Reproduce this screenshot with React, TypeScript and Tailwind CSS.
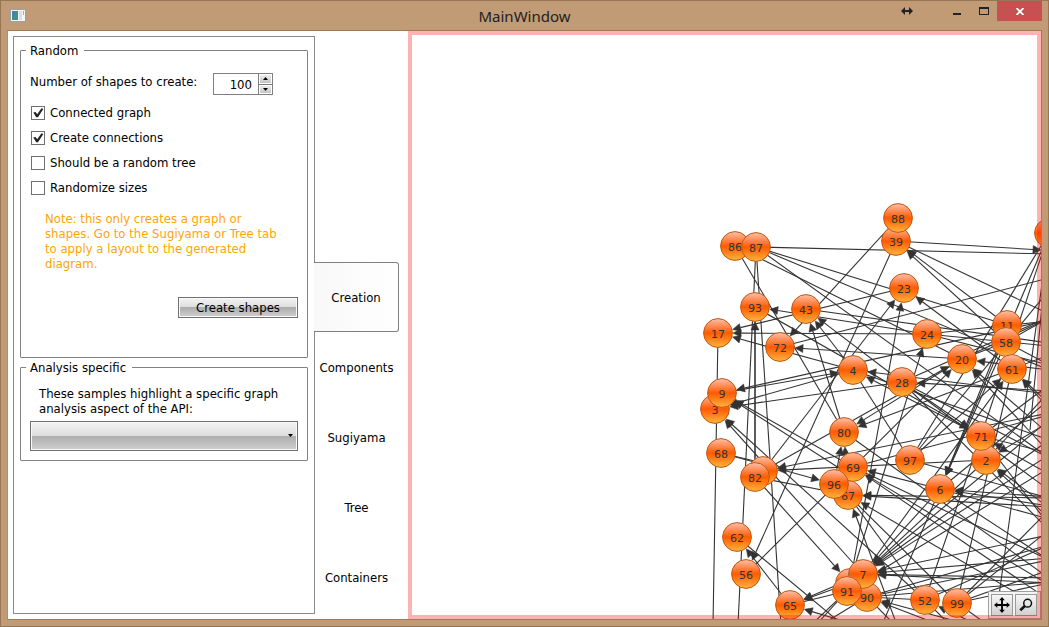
import { useState } from "react";

type Point = [number, number];
type End = string | Point;

const R = 14;

const nodes: Record<string, Point> = {
  "offA": [1049, 233],
  "86": [735, 246],
  "87": [756, 247],
  "93": [755, 307],
  "43": [806, 309],
  "17": [718, 333],
  "72": [780, 347],
  "39": [896, 241],
  "88": [898, 218],
  "23": [904, 288],
  "24": [927, 334],
  "20": [962, 359],
  "11": [1007, 325],
  "58": [1006, 342],
  "61": [1012, 369],
  "28": [902, 382],
  "4": [853, 370],
  "3": [715, 409],
  "9": [722, 393],
  "68": [721, 453],
  "offH": [763, 471],
  "82": [755, 477],
  "80": [844, 432],
  "67": [848, 495],
  "69": [853, 467],
  "96": [834, 484],
  "97": [910, 460],
  "2": [986, 460],
  "71": [981, 436],
  "6": [940, 489],
  "62": [737, 537],
  "56": [746, 574],
  "65": [790, 605],
  "offJ": [850, 583],
  "90": [867, 597],
  "7": [863, 574],
  "91": [847, 591],
  "52": [925, 600],
  "99": [957, 603],
};

const drawOrder = [
  "offA", "86", "87", "93", "43", "17", "72", "39", "88", "23", "24", "20",
  "11", "58", "61", "28", "4", "3", "9", "68", "offH", "82", "80", "67", "69",
  "96", "97", "2", "71", "6", "62", "56", "65", "offJ", "90", "7", "91", "52", "99",
];

const lines: [End, End][] = [
  ["87", [1049, 254]],
  ["86", "80"],
  ["87", [781, 625]],
  ["87", [738, 625]],
  ["17", [713, 625]],
  ["43", [1049, 343]],
  ["72", [1049, 278]],
  ["87", "11"],
  ["87", [1049, 370]],
  ["86", "20"],
  ["87", [1049, 458]],
  ["4", "97"],
  ["4", [1049, 440]],
  ["28", [1049, 530]],
  ["28", [1049, 458]],
  ["61", "99"],
  ["offA", [997, 610]],
  ["offA", "97"],
  ["offA", "71"],
  ["offA", [1030, 430]],
  ["39", [1049, 314]],
  ["24", [1049, 321]],
  ["24", [1049, 346]],
  ["24", [1049, 365]],
  ["28", [1049, 317]],
  ["20", [1049, 318]],
  ["20", "58"],
  ["58", [1049, 318]],
  ["58", [1049, 365]],
  ["61", [1049, 355]],
  ["71", [1049, 453]],
  ["52", "71"],
  ["6", [882, 625]],
  ["62", [843, 625]],
  ["91", [811, 625]],
  ["91", [816, 625]],
  ["90", [821, 625]],
  ["68", [763, 463]],
  ["82", "67"],
  ["90", [1049, 545]],
  ["90", [1049, 582]],
  ["90", "52"],
  ["99", [1049, 530]],
  ["99", [1049, 510]],
  ["99", [1049, 583]],
  ["99", [1049, 570]],
  ["99", [988, 625]],
  ["52", [950, 625]],
  ["67", "99"],
  ["67", "52"],
  ["71", [1049, 525]],
  ["28", [1049, 490]],
  ["69", [1049, 560]],
  ["6", [1049, 560]],
  ["6", [1049, 519]],
  ["97", [1049, 498]],
  ["90", [895, 625]],
  ["7", [1049, 420]],
  ["91", [1049, 468]],
  ["52", [1049, 545]],
  ["7", [1049, 578]],
  ["91", "65"],
  ["93", "82"],
  ["80", [1049, 578]],
  ["69", [1049, 415]],
  ["97", [1049, 290]],
  ["2", [1049, 392]],
  ["71", [1049, 385]],
  ["6", [1049, 400]],
  ["90", [1049, 560]],
];

const arrows: [End, End][] = [
  ["39", [1041, 250]],
  ["82", "93"],
  ["24", "93"],
  ["23", "17"],
  ["24", "17"],
  ["4", "17"],
  ["20", "72"],
  ["88", "72"],
  ["39", "56"],
  ["56", "20"],
  ["61", "23"],
  ["93", "71"],
  ["28", "71"],
  ["80", "43"],
  ["4", "43"],
  ["28", "43"],
  ["offH", "23"],
  ["offJ", "23"],
  ["91", "24"],
  [[1049, 320], "9"],
  ["9", "4"],
  ["28", "3"],
  ["4", "3"],
  ["69", "9"],
  [[853, 477], "9"],
  ["52", "3"],
  ["7", "3"],
  ["82", "offJ"],
  ["68", "96"],
  [[1049, 413], "offH"],
  ["2", "offH"],
  ["20", "80"],
  ["61", "80"],
  ["offH", "20"],
  ["96", "80"],
  ["67", "80"],
  [[1049, 391], "28"],
  ["71", "4"],
  [[1049, 394], "4"],
  [[1049, 434], "20"],
  [[1049, 452], "20"],
  [[1049, 370], "20"],
  ["97", "61"],
  ["7", "61"],
  [[1049, 408], "61"],
  [[1045, 400], "61"],
  ["offA", "6"],
  ["58", "6"],
  ["11", "6"],
  ["11", "39"],
  ["58", "39"],
  [[1049, 474], "71"],
  [[1049, 422], "2"],
  [[1049, 508], "2"],
  [[1049, 518], "2"],
  [[1049, 497], "6"],
  [[1049, 506], "6"],
  ["2", "7"],
  ["6", "7"],
  [[1049, 440], "7"],
  [[1049, 455], "7"],
  [[1049, 585], "69"],
  [[1049, 600], "69"],
  ["6", "69"],
  [[1049, 498], "67"],
  [[1049, 507], "67"],
  [[1049, 612], "67"],
  [[897, 625], "67"],
  [[1049, 535], "7"],
  [[1049, 558], "7"],
  [[1049, 583], "7"],
  [[940, 625], "90"],
  [[970, 625], "90"],
  ["offJ", "65"],
  ["7", "65"],
  [[850, 623], "65"],
  ["65", "62"],
  [[978, 625], "52"],
];

const at = (end: End): Point => (typeof end === "string" ? nodes[end] : end);

function Arrow({ from, to }: { from: End; to: End }) {
  const [x1, y1] = at(from);
  const [x2, y2] = at(to);
  const length = Math.hypot(x2 - x1, y2 - y1);
  const ux = (x2 - x1) / length;
  const uy = (y2 - y1) / length;
  const gap = typeof to === "string" ? R + 1 : 0;
  const tx = x2 - ux * gap;
  const ty = y2 - uy * gap;
  const bx = tx - ux * 8;
  const by = ty - uy * 8;
  const head = `${tx},${ty} ${bx - uy * 4},${by + ux * 4} ${bx + uy * 4},${by - ux * 4}`;
  return (
    <>
      <line x1={x1} y1={y1} x2={bx} y2={by} />
      <polygon points={head} fill="#333" strokeWidth="0.5" />
    </>
  );
}

function Diagram() {
  return (
    <svg width="641" height="594" className="block shrink-0" role="img" aria-label="Graph">
      <defs>
        <linearGradient id="ball" x1="0" y1="0" x2="0" y2="1">
          <stop offset="0" stopColor="#ffc0ac" />
          <stop offset="0.5" stopColor="#ff5a00" />
          <stop offset="1" stopColor="#ffb540" />
        </linearGradient>
      </defs>
      <g transform="translate(-408 -31)">
        <g stroke="#333" strokeWidth="1.1">
          {lines.map(([a, b], i) => (
            <line key={i} x1={at(a)[0]} y1={at(a)[1]} x2={at(b)[0]} y2={at(b)[1]} />
          ))}
          {arrows.map(([a, b], i) => (
            <Arrow key={i} from={a} to={b} />
          ))}
        </g>
        {drawOrder.map((id) => {
          const [x, y] = nodes[id];
          return (
            <g key={id}>
              <circle cx={x} cy={y} r={R + 0.4} fill="url(#ball)" stroke="#bd5a10" />
              {!id.startsWith("off") && (
                <text x={x} y={y + 5} textAnchor="middle" fill="#333" className="font-['DejaVu_Sans',sans-serif] text-[11px]">
                  {id}
                </text>
              )}
            </g>
          );
        })}
      </g>
    </svg>
  );
}

function CheckRow({ label, initial }: { label: string; initial: boolean }) {
  const [on, setOn] = useState(initial);
  return (
    <label className="flex h-[25px] items-center gap-[5px] pl-px">
      <span className="relative grid">
        <input
          type="checkbox"
          checked={on}
          onChange={() => setOn(!on)}
          className="h-[14px] w-[14px] appearance-none border border-[#707070] bg-white"
        />
        {on && (
          <svg viewBox="0 0 14 14" className="pointer-events-none absolute inset-0 h-[14px] w-[14px]">
            <path d="M2.3 6.6 L4.6 6 L6.2 8.3 L10.5 2.3 L12.3 3 L7 11.3 L5.2 11.3 Z" fill="#222" />
          </svg>
        )}
      </span>
      {label}
    </label>
  );
}

const glossy =
  "border border-[#707070] bg-[linear-gradient(#f3f3f3,#dddddd_50%,#adadad_50%,#cfcfcf)] shadow-[inset_0_0_0_1px_#fafafa]";

const toolButton =
  "grid h-[22px] w-[22px] place-items-center border border-[#999] bg-[linear-gradient(#f6f6f6,#d0d0d0)]";

const tabs = ["Creation", "Components", "Sugiyama", "Tree", "Containers"];

export default function App() {
  const [tab, setTab] = useState("Creation");
  const [count, setCount] = useState(100);
  return (
    <div className="flex h-screen flex-col border border-[#967655] bg-[#c09b76] px-[6px] pb-[6px] font-['DejaVu_Sans_Condensed','DejaVu_Sans',sans-serif] text-[13px] leading-[15px] text-black">
      <header className="grid h-[29px] shrink-0 grid-cols-[1fr_auto_1fr]">
        <div className="flex items-center pl-[3px]">
          <svg width="16" height="13" viewBox="0 0 16 13">
            <rect x="0.5" y="0.5" width="15" height="12" fill="#f4f5f6" stroke="#98a0a6" />
            <rect x="2" y="2" width="6" height="9" fill="#438f88" />
            <rect x="2" y="2" width="3" height="5" fill="#4583a6" />
            <rect x="9" y="2" width="3" height="9" fill="#dddddd" />
            <rect x="13" y="2" width="1" height="4" fill="#83b9bd" />
          </svg>
        </div>
        <h1 className="flex items-center pt-[2px] font-['Noto_Sans',sans-serif] text-[15px] text-[#222]">MainWindow</h1>
        <div className="flex items-start justify-end">
          <svg width="12" height="10" viewBox="0 0 12 10" className="mt-[5px] mr-[31px]">
            <path d="M0 5 L4 1 V4 H8 V1 L12 5 L8 9 V6 H4 V9 Z" fill="#222" />
          </svg>
          <button aria-label="Minimize" className="flex h-5 w-[26px] justify-center pt-[6px]">
            <svg width="8" height="8" viewBox="0 0 8 8"><rect y="6" width="8" height="2" fill="#222" /></svg>
          </button>
          <button aria-label="Maximize" className="flex h-5 w-[27px] justify-center pt-[6px]">
            <svg width="10" height="8" viewBox="0 0 10 8"><path d="M0 0H10V8H0Z M1 2V7H9V2Z" fill="#222" fillRule="evenodd" /></svg>
          </button>
          <button aria-label="Close" className="grid h-5 w-[45px] place-items-center bg-[#c75050]">
            <svg width="8" height="7" viewBox="0 0 8 7"><path d="M0.5 0 L7.5 7 M7.5 0 L0.5 7" stroke="#fff" strokeWidth="1.8" /></svg>
          </button>
        </div>
      </header>

      <main className="flex min-h-0 flex-1 border border-[#a07c56] border-l-[#b18d68] bg-white">
        <div className="flex w-[400px] shrink-0 py-[5px] pl-[5px]">
          <section className="w-[302px] border border-[#8a8a8a] px-[6px] pt-[6px]">
            <fieldset className="h-[315px] rounded-[1px] border border-[#828282] px-[9px]">
              <legend className="ml-[-4px] pr-[6px] pl-1">Random</legend>
              <div className="flex items-start justify-between pt-[15px] pr-[25px]">
                <label htmlFor="count" className="pt-px">Number of shapes to create:</label>
                <div className="flex h-[22px] w-[60px] border border-[#808080]">
                  <input
                    id="count"
                    value={count}
                    onChange={(e) => setCount(Number(e.target.value) || 0)}
                    className="w-[44px] pr-[6px] text-right outline-none"
                  />
                  <div className="grid flex-1 grid-rows-2 gap-px border-l border-[#808080] bg-[#808080]">
                    <button aria-label="Increase" onClick={() => setCount(count + 1)} className="grid place-items-center border border-white bg-[linear-gradient(#eee,#c4c4c4)]">
                      <svg width="5" height="3" viewBox="0 0 5 3"><path d="M0 3 L2.5 0 L5 3Z" /></svg>
                    </button>
                    <button aria-label="Decrease" onClick={() => setCount(count - 1)} className="grid place-items-center border border-white bg-[linear-gradient(#eee,#c4c4c4)]">
                      <svg width="5" height="3" viewBox="0 0 5 3"><path d="M0 0 L2.5 3 L5 0Z" /></svg>
                    </button>
                  </div>
                </div>
              </div>
              <div className="pt-[5px]">
                <CheckRow label="Connected graph" initial />
                <CheckRow label="Create connections" initial />
                <CheckRow label="Should be a random tree" initial={false} />
                <CheckRow label="Randomize sizes" initial={false} />
              </div>
              <p className="px-[15px] pt-[11px] text-[#ffa500]">
                Note: this only creates a graph or shapes. Go to the Sugiyama or Tree tab to apply a layout to the generated diagram.
              </p>
              <div className="flex justify-end pt-[26px]">
                <button className={`h-[21px] w-[120px] ${glossy}`}>Create shapes</button>
              </div>
            </fieldset>
            <fieldset className="mt-[2px] h-[101px] rounded-[1px] border border-[#828282] px-[9px]">
              <legend className="ml-[-4px] pr-[6px] pl-1">Analysis specific</legend>
              <label htmlFor="sample" className="block px-[9px] pt-[11px]">
                These samples highlight a specific graph analysis aspect of the API:
              </label>
              <div className="relative mt-[5px] grid">
                <select id="sample" className={`h-[30px] w-full appearance-none ${glossy}`} defaultValue="">
                  <option value=""></option>
                </select>
                <svg width="5" height="3" viewBox="0 0 5 3" className="pointer-events-none absolute top-[13px] right-[5px]">
                  <path d="M0 0 L2.5 3 L5 0Z" />
                </svg>
              </div>
            </fieldset>
          </section>
          <nav role="tablist" className="-ml-px flex flex-1 flex-col justify-end pr-[9px] pb-[2px]">
            {tabs.map((name) => (
              <button
                key={name}
                role="tab"
                aria-selected={tab === name}
                onClick={() => setTab(name)}
                className={
                  tab === name
                    ? "h-[70px] rounded-r-[3px] border border-l-0 border-[#808080] bg-[linear-gradient(90deg,#f8f8f8,#ffffff)]"
                    : "h-[70px] border border-transparent"
                }
              >
                {name}
              </button>
            ))}
          </nav>
        </div>
        <section className="relative min-w-0 flex-1 overflow-hidden">
          <Diagram />
          <div className="absolute right-0 bottom-0 flex gap-[2px] border border-[#a0a0a0] bg-[#f4f4f4] pt-[2px] pr-[3px] pb-[2px] pl-[2px]">
            <button aria-label="Pan" className={toolButton}>
              <svg width="16" height="16" viewBox="0 0 17 17">
                <path d="M8.5 0 L11.5 3.5 H9.5 V7.5 H13.5 V5.5 L17 8.5 L13.5 11.5 V9.5 H9.5 V13.5 H11.5 L8.5 17 L5.5 13.5 H7.5 V9.5 H3.5 V11.5 L0 8.5 L3.5 5.5 V7.5 H7.5 V3.5 H5.5 Z" />
              </svg>
            </button>
            <button aria-label="Zoom" className={toolButton}>
              <svg width="14" height="14" viewBox="0 0 13 13" fill="none" stroke="#111">
                <circle cx="8" cy="4.8" r="3.6" strokeWidth="1.4" />
                <path d="M5.4 7.4 L1.2 11.4" strokeWidth="2.4" />
              </svg>
            </button>
          </div>
          <div className="pointer-events-none absolute inset-0 border-4 border-[#ff0000]/30" />
        </section>
      </main>
    </div>
  );
}
